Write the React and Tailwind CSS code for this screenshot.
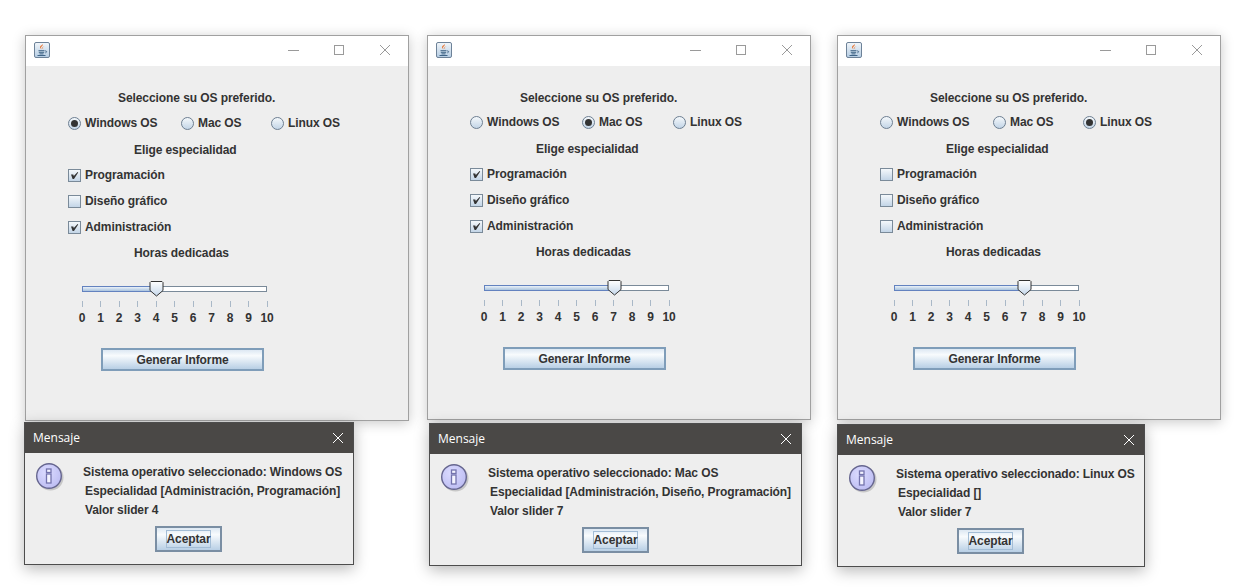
function JavaIcon() {
  return (
    <svg width="16" height="16" viewBox="0 0 16 16" className="block">
      <defs>
        <linearGradient id="jbg" x1="0" y1="0" x2="0" y2="1">
          <stop offset="0" stopColor="#f2f6fa" />
          <stop offset="1" stopColor="#b4cce3" />
        </linearGradient>
      </defs>
      <rect x="0.5" y="0.5" width="15" height="15" rx="1.5" fill="url(#jbg)" stroke="#6d8298" />
      <path d="M8.8 2c.9 1.500-2 2.500-1.800 4 .1.600.6 1 .9 1.500-1.500-.9-2.200-1.800-1.700-3 .4-1 2.400-1.200 2.600-2.500zM10.500 4.200c-1 .5-1.900 1-1.600 2 .1.400.3.700.4 1-1-.6-1.100-1.300-.8-2 .3-.5 1.200-.7 2-1z" fill="#e8702a" />
      <path d="M4.500 8.700h6M4.800 10.300h5.400M5.500 11.900h4M3.500 13.500h8M11 9c1.800-.3 2.300 1.100.4 1.900" fill="none" stroke="#3f6486" strokeWidth="1" />
    </svg>
  );
}

function Radio({ checked }) {
  return (
    <span className="relative block w-[13px] h-[13px] rounded-full border border-[#6d7f92] bg-gradient-to-b from-[#f4f8fb] to-[#c3d5e7] shrink-0">
      {checked && <span className="absolute left-[2px] top-[2px] w-[7px] h-[7px] rounded-full bg-[#333333]" />}
    </span>
  );
}

function Check({ checked }) {
  return (
    <span className="block w-[13px] h-[13px] border border-[#7a8a99] bg-gradient-to-b from-[#f4f8fb] to-[#c3d5e7] shrink-0">
      {checked && (
        <svg width="11" height="11" viewBox="0 0 11 11" className="block">
          <path d="M2 4.500h2.300l.5 1.500L8.600 2l.6.4-4.200 6.600H3.600z" fill="#333333" />
        </svg>
      )}
    </span>
  );
}

function Slider({ value }) {
  const pct = Math.round((value / 10) * 185);
  const ticks = [0, 1, 2, 3, 4, 5, 6, 7, 8, 9, 10];
  return (
    <div className="ml-[56px] w-[185px] relative">
      <div className="h-[6px] flex">
        <div className="h-full border border-r-0 border-[#6382bf] bg-gradient-to-b from-[#eaf1f8] to-[#a9c3de]" style={{ width: pct }} />
        <div className="h-full flex-1 border border-l-0 border-[#7a8a99] bg-white" />
      </div>
      <svg width="15" height="16" viewBox="0 0 15 16" className="absolute top-[-5px]" style={{ left: pct - 7 }}>
        <defs>
          <linearGradient id={`th${value}`} x1="0" y1="0" x2="0" y2="1">
            <stop offset="0" stopColor="#ffffff" />
            <stop offset="1" stopColor="#c5d7ea" />
          </linearGradient>
        </defs>
        <path d="M2 .5h11l1 1v8L7.500 15 1 9.500v-8z" fill={`url(#th${value})`} stroke="#333333" />
      </svg>
      <div className="flex justify-between mt-[9px]">
        {ticks.map((t) => (
          <div key={t} className="w-0 flex flex-col items-center">
            <div className="w-px h-[6px] bg-[#a9b8c7] shrink-0" />
            <div className="mt-[4px] h-[14px] leading-[14px]">{t}</div>
          </div>
        ))}
      </div>
    </div>
  );
}

function MainWindow({ left, height, os, checks, value, offset, radioWidths }) {
  const oses = ['Windows OS', 'Mac OS', 'Linux OS'];
  const specs = ['Programación', 'Diseño gráfico', 'Administración'];
  return (
    <div
      className="absolute top-[35px] w-[384px] border border-[#a0a0a0] bg-[#eeeeee] shadow-[0_2px_12px_rgba(0,0,0,0.22)]"
      style={{ left, height }}
    >
      <div className="h-[30px] bg-white flex items-center pl-[8px] pb-[2px]">
        <JavaIcon />
        <div className="ml-auto flex items-center pr-[17px]">
          <div className="w-[11px] h-px bg-[#9a9a9a] mr-[35px]" />
          <div className="w-[10px] h-[10px] border border-[#9a9a9a] mr-[35px]" />
          <svg width="12" height="12" viewBox="0 0 12 12" className="block">
            <path d="M1 1l10 10M11 1 1 11" stroke="#9a9a9a" fill="none" />
          </svg>
        </div>
      </div>
      <div className="pt-[25px] text-[12px] font-bold tracking-[-0.08px] text-[#333333] leading-[14px] [font-family:'Liberation_Sans',Arial,sans-serif]">
        <div className="ml-[92px] h-[14px]">Seleccione su OS preferido.</div>
        <div className="flex items-center pl-[42px]" style={{ marginTop: 10 + offset }}>
          {oses.map((name, i) => (
            <div key={name} className="flex items-center gap-[4px]" style={{ width: radioWidths[i] }}>
              <Radio checked={os === name} />
              <span>{name}</span>
            </div>
          ))}
        </div>
        <div className="ml-[108px] mt-[13px] mb-[-1px]">Elige especialidad</div>
        {specs.map((s, i) => (
          <div key={s} className="flex items-center gap-[4px] pl-[42px] mt-[12px]">
            <Check checked={checks[i]} />
            <span>{s}</span>
          </div>
        ))}
        <div className="ml-[108px] mt-[12px]">Horas dedicadas</div>
        <div className="mt-[26px]">
          <Slider value={value} />
        </div>
        <div className="ml-[75px] mt-[23px] w-[163px] h-[23px] border-2 border-[#7f9db9] bg-gradient-to-b from-[#dde8f3] via-[#f8fbfd] via-30% to-[#b8cfe5] flex items-center justify-center">
          Generar Informe
        </div>
      </div>
    </div>
  );
}

function InfoIcon({ id }) {
  return (
    <svg width="30" height="30" viewBox="0 0 30 30" className="block shrink-0">
      <defs>
        <radialGradient id={id} cx="0.4" cy="0.35" r="0.7">
          <stop offset="0" stopColor="#dcdcff" />
          <stop offset="1" stopColor="#bcbcf2" />
        </radialGradient>
      </defs>
      <circle cx="14.500" cy="14.500" r="13" fill="#a8a8a8" opacity="0.55" />
      <circle cx="13" cy="13" r="12.300" fill={`url(#${id})`} stroke="#66668f" strokeWidth="1.400" />
      <rect x="10.500" y="6" width="4.500" height="3.500" fill="#f4f4ff" stroke="#7373ad" strokeWidth="1.300" />
      <rect x="10.500" y="11" width="4.500" height="9" fill="#f4f4ff" stroke="#7373ad" strokeWidth="1.300" />
    </svg>
  );
}

function Dialog({ left, top, width, height, lines, btnLeft, id }) {
  return (
    <div
      className="absolute border border-[#4d4d4d] bg-[#eeeeee] shadow-[0_4px_14px_rgba(0,0,0,0.28)]"
      style={{ left, top, width, height }}
    >
      <div className="h-[30px] bg-[#4a4846] flex items-center justify-between pl-[8px] pr-[9px] text-white text-[12px] [font-family:'Open_Sans',sans-serif]">
        <span>Mensaje</span>
        <svg width="12" height="12" viewBox="0 0 12 12" className="block">
          <path d="M1 1l10 10M11 1 1 11" stroke="#ffffff" fill="none" />
        </svg>
      </div>
      <div className="flex pl-[11px] pt-[10px] text-[12px] font-bold tracking-[-0.1px] text-[#333333] leading-[19px] [font-family:'Liberation_Sans',Arial,sans-serif]">
        <InfoIcon id={id} />
        <div className="ml-[17px]">
          <div>{lines[0]}</div>
          <div className="pl-[2px]">{lines[1]}</div>
          <div className="pl-[2px]">{lines[2]}</div>
        </div>
      </div>
      <div
        className="mt-[6px] w-[67px] h-[26px] border-2 border-[#7a8ea3] bg-gradient-to-b from-[#dde8f3] via-[#f8fbfd] via-30% to-[#b8cfe5] text-[12px] font-bold tracking-[-0.1px] text-[#333333] flex items-center justify-center [font-family:'Liberation_Sans',Arial,sans-serif]"
        style={{ marginLeft: btnLeft }}
      >
        <span className="border border-[#a3bdd6] leading-[16px]">Aceptar</span>
      </div>
    </div>
  );
}

export default function App() {
  return (
    <div className="relative w-[1240px] h-[588px] bg-white overflow-hidden">
      <MainWindow left={25} height={386} os="Windows OS" checks={[true, false, true]} value={4} offset={1} radioWidths={[113, 90, 80]} />
      <MainWindow left={427} height={385} os="Mac OS" checks={[true, true, true]} value={7} offset={0} radioWidths={[112, 91, 80]} />
      <MainWindow left={837} height={385} os="Linux OS" checks={[false, false, false]} value={7} offset={0} radioWidths={[113, 90, 80]} />
      <Dialog
        id="info1"
        left={24}
        top={422}
        width={330}
        height={143}
        btnLeft={130}
        lines={['Sistema operativo seleccionado: Windows OS', 'Especialidad [Administración, Programación]', 'Valor slider 4']}
      />
      <Dialog
        id="info2"
        left={429}
        top={423}
        width={373}
        height={143}
        btnLeft={152}
        lines={['Sistema operativo seleccionado: Mac OS', 'Especialidad [Administración, Diseño, Programación]', 'Valor slider 7']}
      />
      <Dialog
        id="info3"
        left={837}
        top={424}
        width={308}
        height={143}
        btnLeft={119}
        lines={['Sistema operativo seleccionado: Linux OS', 'Especialidad []', 'Valor slider 7']}
      />
    </div>
  );
}
